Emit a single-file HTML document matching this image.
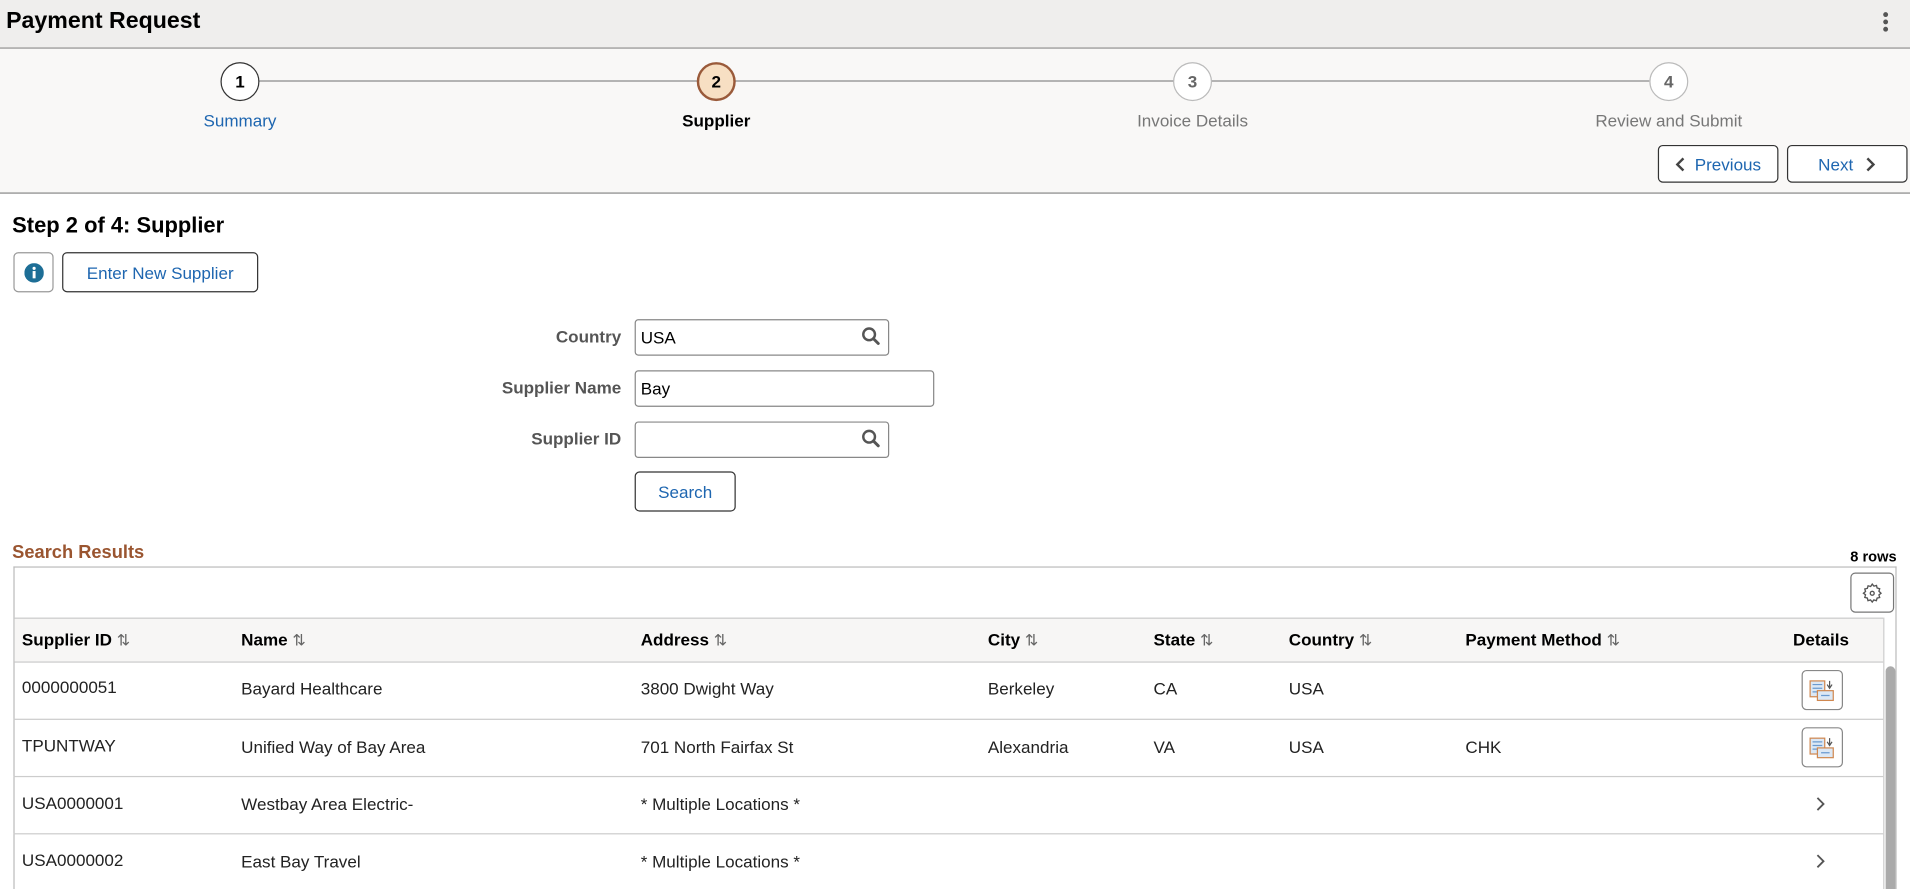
<!DOCTYPE html>
<html><head><meta charset="utf-8"><style>
html,body{margin:0;padding:0;overflow:hidden;background:#fff}
#w{width:1568px;height:730px;position:relative;transform:scale(1.21811);transform-origin:0 0;font-family:"Liberation Sans",Arial,sans-serif;color:#000}
.a{position:absolute}
.btn{position:absolute;border:1px solid #333;border-radius:4px;background:#fff;color:#1e66b0;font-size:14px;box-sizing:border-box;display:flex;align-items:center;justify-content:center}
.circ{position:absolute;width:32px;height:32px;border-radius:50%;box-sizing:border-box;background:#fff;display:flex;align-items:center;justify-content:center;font-weight:bold;font-size:14px;top:51px}
.lbl{position:absolute;font-size:14px;text-align:center;width:200px;top:91px}
.fl{position:absolute;font-size:14px;font-weight:bold;color:#555;text-align:right;width:300px;left:210px}
.inp{position:absolute;left:521px;border:1px solid #888;border-radius:3px;box-sizing:border-box;font-size:14px;padding:6px 4px;height:30px;background:#fff}
.th{position:absolute;font-size:14px;font-weight:bold;top:517px}
.td{position:absolute;font-size:14px;color:#222}
.s{color:#666;font-weight:normal;font-size:13px}
.hr{position:absolute;left:11px;width:1535px;height:1px;background:#ccc}
</style></head><body><div id="w">
<div class="a" style="left:0;top:0;width:1568px;height:39px;background:#efeeed;border-bottom:1px solid #888"></div>
<div class="a" style="left:5px;top:7px;font-size:19px;font-weight:bold">Payment Request</div>
<div class="a" style="left:1546px;top:10px;width:4px;height:4px;border-radius:2px;background:#555;box-shadow:0 6px 0 #555,0 12px 0 #555"></div>
<div class="a" style="left:0;top:40px;width:1568px;height:118px;background:#f9f8f7;border-bottom:1px solid #888"></div>
<div class="a" style="left:213px;top:66px;width:1141px;height:1px;background:#888"></div>
<div class="circ" style="left:181px;border:1.5px solid #333">1</div>
<div class="circ" style="left:572px;border:2px solid #9a5a3a;background:#f7dfc3">2</div>
<div class="circ" style="left:963px;border:1px solid #bbb;color:#666">3</div>
<div class="circ" style="left:1354px;border:1px solid #bbb;color:#666">4</div>
<div class="lbl" style="left:97px;color:#1e66b0">Summary</div>
<div class="lbl" style="left:488px;font-weight:bold">Supplier</div>
<div class="lbl" style="left:879px;color:#777">Invoice Details</div>
<div class="lbl" style="left:1270px;color:#777">Review and Submit</div>
<div class="btn" style="left:1361px;top:119px;width:99px;height:31px"><svg width="10" height="14" style="margin-right:6px"><path d="M7 2L2 7l5 5" fill="none" stroke="#444" stroke-width="2"/></svg>Previous</div>
<div class="btn" style="left:1467px;top:119px;width:99px;height:31px">Next<svg width="10" height="14" style="margin-left:9px"><path d="M3 2l5 5-5 5" fill="none" stroke="#444" stroke-width="2"/></svg></div>
<div class="a" style="left:10px;top:175px;font-size:18px;font-weight:bold">Step 2 of 4: Supplier</div>
<div class="btn" style="left:11px;top:207px;width:33px;height:33px;border-color:#999"><svg width="16" height="16"><circle cx="8" cy="8" r="8" fill="#1d6e96"/><rect x="6.8" y="6.5" width="2.4" height="6" fill="#fff"/><circle cx="8" cy="4.3" r="1.3" fill="#fff"/></svg></div>
<div class="btn" style="left:51px;top:207px;width:161px;height:33px">Enter New Supplier</div>
<div class="fl" style="top:268px">Country</div>
<div class="fl" style="top:310px">Supplier Name</div>
<div class="fl" style="top:352px">Supplier ID</div>
<div class="inp" style="top:262px;width:209px">USA</div>
<div class="inp" style="top:304px;width:246px">Bay</div>
<div class="inp" style="top:346px;width:209px"></div>
<svg class="a" style="left:707px;top:268px" width="16" height="16"><circle cx="6.5" cy="6.5" r="4.8" fill="none" stroke="#555" stroke-width="2"/><path d="M10 10l4 4" stroke="#555" stroke-width="2.4" stroke-linecap="round"/></svg>
<svg class="a" style="left:707px;top:352px" width="16" height="16"><circle cx="6.5" cy="6.5" r="4.8" fill="none" stroke="#555" stroke-width="2"/><path d="M10 10l4 4" stroke="#555" stroke-width="2.4" stroke-linecap="round"/></svg>
<div class="btn" style="left:521px;top:387px;width:83px;height:33px">Search</div>
<div class="a" style="left:10px;top:445px;font-size:15px;font-weight:bold;color:#9a5530">Search Results</div>
<div class="a" style="left:1500px;top:450px;width:57px;text-align:right;font-size:12px;font-weight:bold">8 rows</div>
<div class="a" style="left:11px;top:465px;width:1546px;height:270px;border:1px solid #bbb;border-bottom:none;box-sizing:border-box"></div>
<div class="btn" style="left:1519px;top:470px;width:36px;height:33px;border-color:#777"><svg width="18" height="18" viewBox="0 0 18 18"><path d="M9 1.5l1.4 1.7 2.1-.6.5 2.1 2.1.6-.6 2.1L16.2 9l-1.7 1.4.6 2.1-2.1.5-.6 2.1-2.1-.6L9 16.2l-1.4-1.7-2.1.6-.5-2.1-2.1-.6.6-2.1L1.8 9l1.7-1.4-.6-2.1 2.1-.5.6-2.1 2.1.6z" fill="none" stroke="#555" stroke-width="1.1"/><circle cx="9" cy="9" r="1.6" fill="none" stroke="#555" stroke-width="1.1"/></svg></div>
<div class="a" style="left:12px;top:507px;width:1534px;height:35px;background:#f7f6f5;border-top:1px solid #ccc;border-bottom:1px solid #ccc"></div>
<div class="a" style="left:1546px;top:507px;width:1px;height:223px;background:#ccc"></div>
<div class="a" style="left:1548px;top:547px;width:8px;height:190px;border-radius:4px;background:#aaa"></div>
<div class="th" style="left:18px">Supplier ID <span class="s">⇅</span></div>
<div class="th" style="left:198px">Name <span class="s">⇅</span></div>
<div class="th" style="left:526px">Address <span class="s">⇅</span></div>
<div class="th" style="left:811px">City <span class="s">⇅</span></div>
<div class="th" style="left:947px">State <span class="s">⇅</span></div>
<div class="th" style="left:1058px">Country <span class="s">⇅</span></div>
<div class="th" style="left:1203px">Payment Method <span class="s">⇅</span></div>
<div class="th" style="left:1472px">Details</div>
<div class="hr" style="top:590px"></div><div class="hr" style="top:637px"></div><div class="hr" style="top:684px"></div>
<div class="td" style="left:18px;top:556px">0000000051</div><div class="td" style="left:198px;top:557px">Bayard Healthcare</div><div class="td" style="left:526px;top:557px">3800 Dwight Way</div><div class="td" style="left:811px;top:557px">Berkeley</div><div class="td" style="left:947px;top:557px">CA</div><div class="td" style="left:1058px;top:557px">USA</div>
<div class="td" style="left:18px;top:604px">TPUNTWAY</div><div class="td" style="left:198px;top:605px">Unified Way of Bay Area</div><div class="td" style="left:526px;top:605px">701 North Fairfax St</div><div class="td" style="left:811px;top:605px">Alexandria</div><div class="td" style="left:947px;top:605px">VA</div><div class="td" style="left:1058px;top:605px">USA</div><div class="td" style="left:1203px;top:605px">CHK</div>
<div class="td" style="left:18px;top:651px">USA0000001</div><div class="td" style="left:198px;top:652px">Westbay Area Electric-</div><div class="td" style="left:526px;top:652px">* Multiple Locations *</div>
<div class="td" style="left:18px;top:698px">USA0000002</div><div class="td" style="left:198px;top:699px">East Bay Travel</div><div class="td" style="left:526px;top:699px">* Multiple Locations *</div>
<div class="btn" style="left:1479px;top:550px;width:34px;height:33px;border-color:#888"><svg width="22" height="18"><rect x="1" y="1" width="12" height="13" fill="#dce8f5" stroke="#d08850"/><path d="M3 4h8M3 7h8M3 10h6" stroke="#6a9ad0"/><rect x="7" y="9" width="13" height="8" fill="#dce8f5" stroke="#d08850"/><path d="M10 13h7" stroke="#6a9ad0"/><path d="M17 1v5M15 4l2 3 2-3" stroke="#555" fill="none"/></svg></div>
<div class="btn" style="left:1479px;top:597px;width:34px;height:33px;border-color:#888"><svg width="22" height="18"><rect x="1" y="1" width="12" height="13" fill="#dce8f5" stroke="#d08850"/><path d="M3 4h8M3 7h8M3 10h6" stroke="#6a9ad0"/><rect x="7" y="9" width="13" height="8" fill="#dce8f5" stroke="#d08850"/><path d="M10 13h7" stroke="#6a9ad0"/><path d="M17 1v5M15 4l2 3 2-3" stroke="#555" fill="none"/></svg></div>
<svg class="a" style="left:1490px;top:653px" width="10" height="14"><path d="M2 2l5 5-5 5" fill="none" stroke="#555" stroke-width="1.5"/></svg>
<svg class="a" style="left:1490px;top:700px" width="10" height="14"><path d="M2 2l5 5-5 5" fill="none" stroke="#555" stroke-width="1.5"/></svg>
</div></body></html>
